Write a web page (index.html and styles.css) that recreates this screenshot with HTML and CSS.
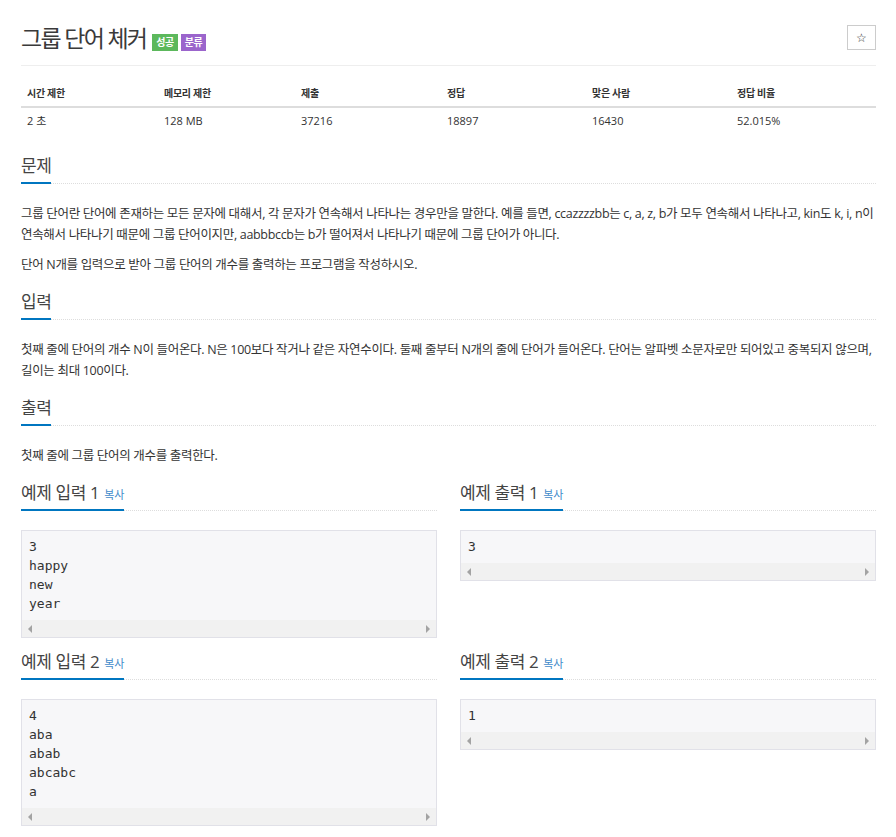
FILE: index.html
```html
<!DOCTYPE html>
<html lang="ko">
<head>
<meta charset="utf-8">
<title>그룹 단어 체커</title>
<link rel="stylesheet" href="styles.css">
</head>
<body>
<div class="container">
  <div class="page-header">
    <h1 class="title">그룹 단어 체커</h1>
    <span class="label label-green">성공</span>
    <span class="label label-purple">분류</span>
    <button class="star-btn">☆</button>
  </div>

  <table class="info">
    <thead>
      <tr><th>시간 제한</th><th>메모리 제한</th><th>제출</th><th>정답</th><th>맞은 사람</th><th>정답 비율</th></tr>
    </thead>
    <tbody>
      <tr><td>2 초</td><td>128 MB</td><td>37216</td><td>18897</td><td>16430</td><td>52.015%</td></tr>
    </tbody>
  </table>

  <section class="section section-problem">
    <div class="headline"><h2>문제</h2></div>
    <p>그룹 단어란 단어에 존재하는 모든 문자에 대해서, 각 문자가 연속해서 나타나는 경우만을 말한다. 예를 들면, ccazzzzbb는 c, a, z, b가 모두 연속해서 나타나고, kin도 k, i, n이 연속해서 나타나기 때문에 그룹 단어이지만, aabbbccb는 b가 떨어져서 나타나기 때문에 그룹 단어가 아니다.</p>
    <p>단어 N개를 입력으로 받아 그룹 단어의 개수를 출력하는 프로그램을 작성하시오.</p>
  </section>

  <section class="section section-input">
    <div class="headline"><h2>입력</h2></div>
    <p>첫째 줄에 단어의 개수 N이 들어온다. N은 100보다 작거나 같은 자연수이다. 둘째 줄부터 N개의 줄에 단어가 들어온다. 단어는 알파벳 소문자로만 되어있고 중복되지 않으며, 길이는 최대 100이다.</p>
  </section>

  <section class="section section-output">
    <div class="headline"><h2>출력</h2></div>
    <p>첫째 줄에 그룹 단어의 개수를 출력한다.</p>
  </section>

  <div class="samples">
    <section class="sample">
      <div class="headline"><h2>예제 입력 1 <span class="copy">복사</span></h2></div>
      <div class="sample-box">
        <pre class="sample-data">3
happy
new
year</pre>
        <div class="scrollbar"><span class="arrow arrow-left"></span><span class="arrow arrow-right"></span></div>
      </div>
    </section>
    <section class="sample">
      <div class="headline"><h2>예제 출력 1 <span class="copy">복사</span></h2></div>
      <div class="sample-box">
        <pre class="sample-data">3</pre>
        <div class="scrollbar"><span class="arrow arrow-left"></span><span class="arrow arrow-right"></span></div>
      </div>
    </section>
    <section class="sample">
      <div class="headline"><h2>예제 입력 2 <span class="copy">복사</span></h2></div>
      <div class="sample-box">
        <pre class="sample-data">4
aba
abab
abcabc
a</pre>
        <div class="scrollbar"><span class="arrow arrow-left"></span><span class="arrow arrow-right"></span></div>
      </div>
    </section>
    <section class="sample">
      <div class="headline"><h2>예제 출력 2 <span class="copy">복사</span></h2></div>
      <div class="sample-box">
        <pre class="sample-data">1</pre>
        <div class="scrollbar"><span class="arrow arrow-left"></span><span class="arrow arrow-right"></span></div>
      </div>
    </section>
  </div>
</div>
</body>
</html>
```

FILE: styles.css
```css
* { box-sizing: border-box; }

html, body {
  margin: 0;
  padding: 0;
  background: #fff;
}

body {
  font-family: "Open Sans", "Noto Sans CJK KR", sans-serif;
  color: #333;
  font-size: 12px;
}

.container {
  width: 855px;
  margin-left: 21px;
}

.page-header {
  display: flex;
  align-items: flex-end;
  padding-top: 25px;
  padding-bottom: 14px;
  border-bottom: 1px solid #eee;
}

.title {
  margin: 0;
  font-size: 23px;
  line-height: 26px;
  font-weight: normal;
  letter-spacing: -1.7px;
  color: #3a3a3a;
}

.label {
  display: inline-block;
  height: 17px;
  line-height: 17px;
  padding: 0 4px;
  margin-left: 3px;
  font-size: 10px;
  font-weight: bold;
  color: #fff;
  letter-spacing: -0.5px;
}

.label-green { background: #5cb85c; margin-left: 6px; }
.label-purple { background: #9b65cc; }

.star-btn {
  align-self: flex-start;
  margin-left: auto;
  width: 29px;
  height: 25px;
  padding: 0;
  border: 1px solid #ccc;
  background: #fff;
  font-family: "DejaVu Sans", sans-serif;
  font-size: 12px;
  color: #333;
}

.info {
  width: 100%;
  margin-top: 12px;
  border-collapse: collapse;
}

.info th, .info td {
  text-align: left;
  padding: 0 6px;
  line-height: 16px;
}

.info th {
  padding-top: 7px;
  padding-bottom: 5px;
  font-size: 10px;
  font-weight: bold;
  letter-spacing: -0.3px;
  border-bottom: 2px solid #ddd;
}

.info td {
  padding-top: 5px;
  padding-bottom: 5px;
  font-size: 11px;
}

.info th:nth-child(1), .info th:nth-child(2) { width: 137px; }
.info th:nth-child(3) { width: 146px; }
.info th:nth-child(4), .info th:nth-child(5) { width: 145px; }

.section-problem { margin-top: 21px; }
.section-input { margin-top: 16px; }
.section-output { margin-top: 16px; }

.headline {
  display: flex;
  border-bottom: 1px dotted #ddd;
  margin-bottom: 19px;
}

.headline h2 {
  margin: 0 0 -1px;
  padding-bottom: 5px;
  font-size: 17px;
  line-height: 22px;
  font-weight: normal;
  letter-spacing: -0.4px;
  color: #444;
  border-bottom: 2px solid #0076c0;
}

.copy {
  font-size: 11px;
  line-height: 1;
  letter-spacing: -0.3px;
  color: #428bca;
  margin-left: 1px;
}

p {
  margin: 0 0 9px;
  line-height: 21px;
  font-size: 12.5px;
  letter-spacing: -0.32px;
  word-break: keep-all;
}

.section p:last-child { margin-bottom: 0; }

.samples {
  display: grid;
  grid-template-columns: 416px 416px;
  column-gap: 23px;
  row-gap: 13px;
  align-items: start;
  margin-top: 16px;
}

.sample-box {
  border: 1px solid #e1e1e8;
  background: #f7f7f9;
}

.sample-data {
  margin: 0;
  padding: 6px 7px 7px;
  font-family: "DejaVu Sans Mono", monospace;
  font-size: 13px;
  line-height: 19px;
  color: #333;
}

.scrollbar {
  height: 17px;
  background: #f1f1f1;
  display: flex;
  align-items: center;
  justify-content: space-between;
  padding: 0 6px;
}

.arrow {
  width: 0;
  height: 0;
  border-top: 4px solid transparent;
  border-bottom: 4px solid transparent;
}

.arrow-left { border-right: 4px solid #a3a3a3; }
.arrow-right { border-left: 4px solid #a3a3a3; }
```
